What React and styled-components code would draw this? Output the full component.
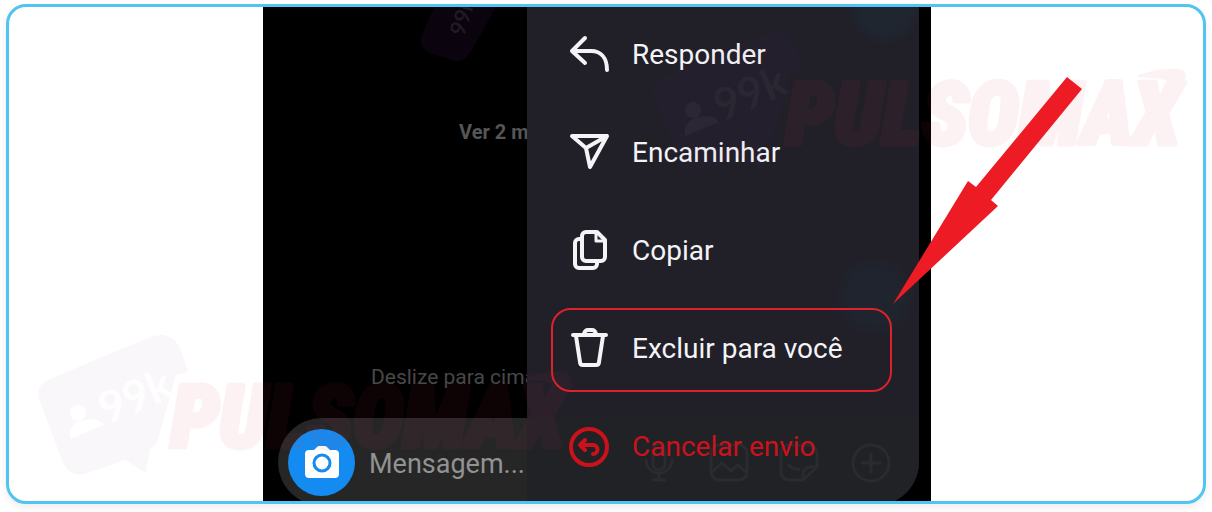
import styled, { createGlobalStyle } from "styled-components";

const GlobalStyle = createGlobalStyle`
  * {
    box-sizing: border-box;
  }

  body {
    margin: 0;
    background: #fff;
    font-family: Roboto, "Liberation Sans", sans-serif;
  }
`;

const Page = styled.main`
  padding: 4px 6px 8px;
`;

const Card = styled.section`
  position: relative;
  display: flex;
  justify-content: center;
  padding-right: 18px;
  overflow: hidden;
  border: 3px solid #51c4f1;
  border-radius: 20px;
  background: #fff;
  box-shadow: 0 3px 8px rgba(0, 0, 0, 0.08);
`;

const Phone = styled.div`
  position: relative;
  display: flex;
  flex-direction: column;
  flex: 0 1 668px;
  overflow: hidden;
  background: #000;
`;

const Chat = styled.div`
  display: flex;
  flex-direction: column;
  justify-content: space-between;
  height: 411px;
  padding: 112px 0 28px 108px;
`;

const ChatNote = styled.p`
  margin: 0;
  padding-left: ${(props) => props.$indent || 0}px;
  color: ${(props) => props.$color};
  font-size: ${(props) => props.$size}px;
  line-height: 26px;
  font-weight: ${(props) => props.$weight || 400};
`;

const Composer = styled.form`
  display: flex;
  align-items: center;
  gap: 14px;
  height: 88px;
  margin: 0 12px -5px 15px;
  padding: 0 14px 0 10px;
  border-radius: 44px;
  background: #262626;
`;

const CameraButton = styled.button`
  display: flex;
  align-items: center;
  justify-content: center;
  flex: none;
  width: 67px;
  height: 67px;
  padding: 0;
  border: none;
  border-radius: 50%;
  background: #138bf0;
`;

const MessageInput = styled.input`
  flex: 1;
  min-width: 0;
  padding: 4px 0 0;
  border: none;
  outline: none;
  background: transparent;
  color: #9a9a9a;
  font: 400 27px/34px Roboto, "Liberation Sans", sans-serif;

  &::placeholder {
    color: #929292;
    opacity: 1;
  }
`;

const Menu = styled.nav`
  position: absolute;
  top: 0;
  right: 12px;
  bottom: -3px;
  width: 392px;
  padding: 7px 27px 0 24px;
  overflow: hidden;
  border-bottom-right-radius: 42px;
  background: #211f28;
`;

const MenuList = styled.ul`
  position: relative;
  display: flex;
  flex-direction: column;
  gap: 14px;
  margin: 0;
  padding: 0;
  list-style: none;
`;

const MenuButton = styled.button`
  display: flex;
  align-items: center;
  gap: 21px;
  width: 100%;
  height: 84px;
  padding: 0 16px 2px;
  border: 2px solid ${(props) => (props.$marked ? "#dc222b" : "transparent")};
  border-radius: 20px;
  background: transparent;
  color: ${(props) => (props.$danger ? "#cb121c" : "#f4f4f6")};
  font: 400 28px/34px Roboto, "Liberation Sans", sans-serif;
  text-align: left;

  svg {
    flex: none;
  }
`;

const Backdrop = styled.svg`
  position: absolute;
  top: 0;
  left: 0;
`;

const Arrow = styled.svg`
  position: absolute;
  top: 70px;
  left: 884px;
`;

const Mark = styled.svg`
  position: absolute;
  top: ${(props) => props.$top}px;
  left: ${(props) => props.$left}px;
  pointer-events: none;
`;

function Icon({ children }) {
  return (
    <svg
      width="42"
      height="42"
      viewBox="0 0 42 42"
      fill="none"
      stroke="currentColor"
      strokeWidth="4"
      strokeLinecap="round"
      strokeLinejoin="round"
      aria-hidden="true"
    >
      {children}
    </svg>
  );
}

const ReplyIcon = () => (
  <Icon>
    <path d="M16 4L3 17l13 12M4 17h18c10 0 16 7 16 19" />
  </Icon>
);

const SendIcon = () => (
  <Icon>
    <path d="M3 4h35L21 35l-4-19zM17 16L38 4" />
  </Icon>
);

const CopyIcon = () => (
  <Icon>
    <path d="M17 2h11l8 8v17a4 4 0 0 1-4 4H17a4 4 0 0 1-4-4V6a4 4 0 0 1 4-4z" />
    <path d="M27 3v8h8" strokeWidth="3" />
    <path d="M12 9h-2a4 4 0 0 0-4 4v21a4 4 0 0 0 4 4h14a4 4 0 0 0 4-4v-2" />
  </Icon>
);

const TrashIcon = () => (
  <Icon>
    <path d="M4 7h33M7 8l4 26q0 3 3 3h13q3 0 3-3l4-26" />
    <path d="M15 6q1-4 4-4h4q3 0 4 4" />
  </Icon>
);

const UnsendIcon = () => (
  <Icon>
    <circle cx="20" cy="21" r="18" />
    <path d="M16 14l-5 5 5 5M12 19h12a4 4 0 0 1 0 9" />
  </Icon>
);

const CameraIcon = () => (
  <svg width="36" height="34" viewBox="0 0 36 34" aria-hidden="true">
    <path
      d="M5 5h5l3-3q1-1 2-1h6q1 0 2 1l3 3h5a4 4 0 0 1 4 4v20a4 4 0 0 1-4 4H5a4 4 0 0 1-4-4V9a4 4 0 0 1 4-4z"
      fill="#fff"
    />
    <circle cx="18" cy="18" r="8" fill="#fff" stroke="#138bf0" strokeWidth="3" />
  </svg>
);

const items = [
  { label: "Responder", icon: ReplyIcon },
  { label: "Encaminhar", icon: SendIcon },
  { label: "Copiar", icon: CopyIcon },
  { label: "Excluir para você", icon: TrashIcon, marked: true },
  { label: "Cancelar envio", icon: UnsendIcon, danger: true },
];

// The chat showing faintly through the menu
function MenuBackdrop() {
  return (
    <Backdrop width="392" height="497" viewBox="0 0 392 497" aria-hidden="true">
      <defs>
        <radialGradient id="bubble">
          <stop offset="0.6" stopColor="#1f2630" />
          <stop offset="1" stopColor="#1f2630" stopOpacity="0" />
        </radialGradient>
      </defs>
      <circle cx="358" cy="0" r="40" fill="url(#bubble)" />
      <circle cx="348" cy="290" r="44" fill="url(#bubble)" fillOpacity="0.7" />
      <rect y="411" width="392" height="90" fill="#212226" />
      <g fill="none" stroke="#292b2f" strokeWidth="3" strokeLinecap="round" strokeLinejoin="round">
        <rect x="126" y="437" width="12" height="26" rx="6" />
        <path d="M119 453a13 13 0 0 0 26 0M132 466v7M126 473h12" />
        <rect x="184" y="438" width="36" height="35" rx="8" />
        <path d="M185 465l10-9 9 8 7-6 9 8" />
        <path d="M262 438h20a8 8 0 0 1 8 8v14l-14 13h-14a8 8 0 0 1-8-8v-19a8 8 0 0 1 8-8zM276 473v-5q0-8 8-8h6M262 458q4 5 10 4" />
        <circle cx="344" cy="456" r="18" />
        <path d="M344 447v18M335 456h18" />
      </g>
    </Backdrop>
  );
}

function Watermark({ top, left, ink, inkOpacity }) {
  return (
    <Mark $top={top} $left={left} width="550" height="160" viewBox="0 0 550 160" aria-hidden="true">
      <path
        d="M13 44L113 2q24-8 32 16l6 19-12 3-19 68-7 6-4 24-21-13-37 13q-18 5-25-10L2 64Q-2 50 13 44z"
        fill="#7a2a9c"
        fillOpacity="0.04"
      />
      <g fill={ink} fillOpacity={inkOpacity}>
        <circle cx="41" cy="78" r="8" />
        <path d="M33 104q-2-16 14-19 14-3 20 5z" />
        <text
          x="70"
          y="90"
          transform="rotate(-23 70 90)"
          fontFamily="Lato, sans-serif"
          fontSize="44"
          fontWeight="700"
        >
          99k
        </text>
      </g>
      <g fill="#d83058" stroke="#d83058" strokeWidth="5" strokeLinejoin="round" opacity="0.06">
        <text
          x="134"
          y="112"
          fontFamily='"Liberation Sans Narrow", "Roboto Condensed", Roboto, sans-serif'
          fontSize="86"
          fontStyle="italic"
          fontWeight="900"
        >
          PULSOMAX
        </text>
        <path d="M486 44q28-9 44-5 7 4-4 16-4-10-40-11z" strokeWidth="2" />
      </g>
    </Mark>
  );
}

// Tilted copy of the badge, cut off by the top edge
function TiltedBadge() {
  return (
    <Mark $top={0} $left={411} width="80" height="56" viewBox="0 0 80 56" aria-hidden="true">
      <path d="M14 0L2 28q-4 12 8 18l24 8q10 2 16-8L76 0z" fill="#7a2a9c" fillOpacity="0.09" />
      <text
        x="44"
        y="30"
        transform="rotate(-72 44 30)"
        fill="#fff"
        fillOpacity="0.09"
        fontFamily="Lato, sans-serif"
        fontSize="22"
        fontWeight="700"
      >
        99k
      </text>
    </Mark>
  );
}

export default function App() {
  return (
    <>
      <GlobalStyle />
      <Page>
        <Card>
          <Phone>
            <Chat>
              <ChatNote $indent={88} $size={20} $weight={700} $color="#565656">
                Ver 2 mensagens
              </ChatNote>
              <ChatNote $size={21} $color="#484848">
                Deslize para cima
              </ChatNote>
            </Chat>
            <Composer onSubmit={(event) => event.preventDefault()}>
              <CameraButton type="button" aria-label="Câmera">
                <CameraIcon />
              </CameraButton>
              <MessageInput aria-label="Mensagem" placeholder="Mensagem..." />
            </Composer>
            <Menu>
              <MenuBackdrop />
              <MenuList>
                {items.map(({ label, icon: ItemIcon, marked, danger }) => (
                  <li key={label}>
                    <MenuButton type="button" $marked={marked} $danger={danger}>
                      <ItemIcon />
                      {label}
                    </MenuButton>
                  </li>
                ))}
              </MenuList>
            </Menu>
          </Phone>
          <TiltedBadge />
          <Watermark top={328} left={28} ink="#fff" inkOpacity={0.9} />
          <Watermark top={25} left={643} ink="#fff" inkOpacity={0.04} />
          <Arrow width="192" height="230" viewBox="0 0 192 230" aria-hidden="true">
            <path d="M0 227L75 104l8 6L174 0l15 12L98 123l7 6z" fill="#ed1c24" />
          </Arrow>
        </Card>
      </Page>
    </>
  );
}
